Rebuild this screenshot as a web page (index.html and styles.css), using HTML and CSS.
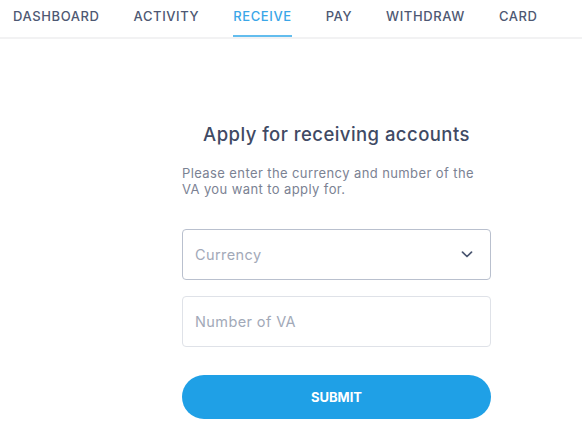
FILE: index.html
```html
<!DOCTYPE html>
<html lang="en">
  <head>
    <meta charset="UTF-8" />
    <meta name="viewport" content="width=device-width, initial-scale=1.0" />
    <title>Receive</title>
    <link rel="stylesheet" href="styles.css">
  </head>

  <body>
    <div class="nav">
      <a class="tab">DASHBOARD</a>
      <a class="tab">ACTIVITY</a>
      <a class="tab active">RECEIVE</a>
      <a class="tab">PAY</a>
      <a class="tab">WITHDRAW</a>
      <a class="tab">CARD</a>
    </div>

    <div class="panel">
      <h2 class="title">Apply for receiving accounts</h2>
      <p class="desc">Please enter the currency and number of the VA you want to apply for.</p>

      <div class="field select">
        <span class="placeholder">Currency</span>
        <svg class="chevron" width="12" height="7" viewBox="0 0 12 7">
          <path d="M1.5 1.2 L6 5.5 L10.5 1.2" fill="none" stroke="#4a5570" stroke-width="1.7" stroke-linecap="round" stroke-linejoin="round" />
        </svg>
      </div>
      <div class="field input">
        <span class="placeholder">Number of VA</span>
      </div>

      <button class="submit">SUBMIT</button>
    </div>
  </body>
</html>
```

FILE: styles.css
```css
body {
  margin: 0;
  padding: 0;
  background: #fff;
  font-family: Inter, "Open Sans", sans-serif;
  color: #4a5570;
}

.nav {
  display: flex;
  gap: 34px;
  padding-left: 13px;
  height: 37px;
  border-bottom: 2px solid #f2f2f3;
}
.nav .tab {
  font-size: 13px;
  font-weight: 500;
  letter-spacing: 0.6px;
  color: #4e5873;
  line-height: 33px;
  border-bottom: 2px solid transparent;
  cursor: pointer;
}
.nav .tab.active {
  color: #3aa6e8;
  border-bottom-color: #63bdee;
}

.panel {
  width: 309px;
  margin-left: 182px;
  padding-top: 83px;
}

.title {
  margin: 0;
  text-align: center;
  font-size: 18.5px;
  font-weight: 500;
  letter-spacing: 0.45px;
  color: #3f4a64;
  line-height: 24px;
}

.desc {
  margin: 19px 0 0;
  font-size: 13px;
  letter-spacing: 0.4px;
  line-height: 16px;
  color: #7b8293;
}

.field {
  box-sizing: border-box;
  height: 51px;
  border-radius: 4px;
  display: flex;
  align-items: center;
  justify-content: space-between;
  padding: 0 17px 0 12px;
}
.field .placeholder {
  font-size: 14.5px;
  letter-spacing: 0.4px;
  color: #a2a9b8;
}
.field.select {
  margin-top: 32px;
  border: 1px solid #b9c0ce;
}
.field.input {
  margin-top: 16px;
  border: 1px solid #dfe2e8;
}

.submit {
  display: block;
  width: 100%;
  height: 44px;
  margin-top: 28px;
  border: none;
  border-radius: 22px;
  background: #1fa0e6;
  color: #fff;
  font-family: inherit;
  font-size: 13px;
  font-weight: 700;
  cursor: pointer;
}
```
